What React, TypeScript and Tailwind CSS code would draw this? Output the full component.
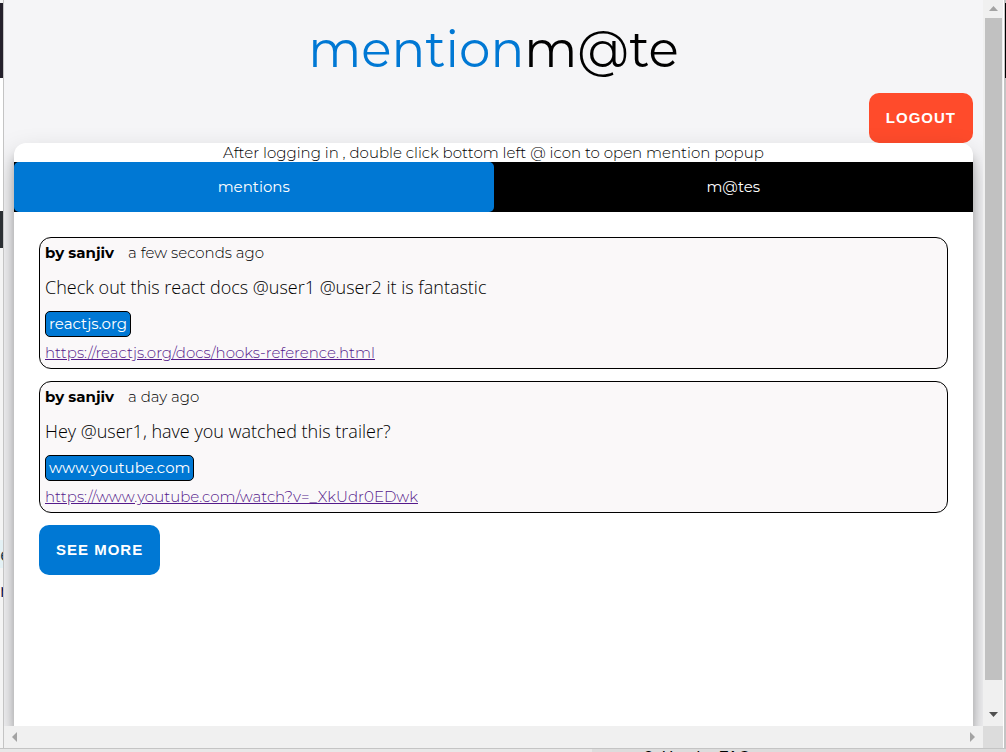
import { useState } from "react";

interface Mention {
  id: number;
  author: string;
  time: string;
  message: string;
  site: string;
  url: string;
}

const MENTIONS: Mention[] = [
  {
    id: 1,
    author: "sanjiv",
    time: "a few seconds ago",
    message: "Check out this react docs @user1 @user2 it is fantastic",
    site: "reactjs.org",
    url: "https://reactjs.org/docs/hooks-reference.html",
  },
  {
    id: 2,
    author: "sanjiv",
    time: "a day ago",
    message: "Hey @user1, have you watched this trailer?",
    site: "www.youtube.com",
    url: "https://www.youtube.com/watch?v=_XkUdr0EDwk",
  },
];

const TABS = ["mentions", "m@tes"];

function MentionCard({ mention }: { mention: Mention }) {
  return (
    <li className="rounded-xl border border-black bg-[#faf8f9] p-[5px]">
      <p className="flex gap-3.5 leading-5">
        <b className="font-bold">by {mention.author}</b>
        <span>{mention.time}</span>
      </p>
      <p className="my-3 font-['Segoe_UI','Open_Sans',sans-serif] text-lg leading-6">{mention.message}</p>
      <span className="block w-fit rounded-[5px] border border-black bg-[#0078d4] px-[3px] font-normal leading-6 text-white">
        {mention.site}
      </span>
      <a href={mention.url} className="mt-[6px] block w-fit leading-5 text-[#551a8b] underline">
        {mention.url}
      </a>
    </li>
  );
}

// Sliver of the host page that shows beside the popup
function PageEdge() {
  return (
    <div className="flex w-1 shrink-0 flex-col overflow-hidden border-r border-[#c4c4c4] bg-[#f4f4f4] pt-[3px] font-['Open_Sans',sans-serif] text-lg font-normal">
      <div className="h-[75px] shrink-0 bg-[#24202b]" />
      <div className="h-[133px] shrink-0 bg-white" />
      <div className="h-[37px] shrink-0 bg-[#2b2f33]" />
      <div className="mt-[292px] h-7 shrink-0 bg-[#e4f1f5] leading-7 text-[#1c3d4d]">e</div>
      <div className="mt-2 h-7 shrink-0 leading-7 text-[#0a1a5c]">n</div>
    </div>
  );
}

function VerticalScrollbar() {
  return (
    <div className="flex w-5 shrink-0 flex-col bg-[#f0f0f0] pl-[2px] pr-px">
      <svg viewBox="0 0 17 18" className="h-[18px] w-[17px] shrink-0" aria-hidden="true">
        <path d="M4 11 L8.5 6 L13 11 Z" fill="#a3a3a3" />
      </svg>
      <div className="flex-1 bg-[#c1c1c1]" />
      <svg viewBox="0 0 17 46" className="h-[46px] w-[17px] shrink-0" aria-hidden="true">
        <path d="M4 32 L13 32 L8.5 37 Z" fill="#505050" />
      </svg>
    </div>
  );
}

function HorizontalScrollbar() {
  return (
    <div className="flex h-[22px] shrink-0 bg-[#f0f0f0]">
      <div className="flex flex-1 items-center justify-between px-[7px]">
        <svg viewBox="0 0 6 10" className="h-[10px] w-[6px]" aria-hidden="true">
          <path d="M6 0 L1 5 L6 10 Z" fill="#a3a3a3" />
        </svg>
        <svg viewBox="0 0 6 10" className="h-[10px] w-[6px]" aria-hidden="true">
          <path d="M0 0 L5 5 L0 10 Z" fill="#a3a3a3" />
        </svg>
      </div>
      <div className="w-5 bg-[#dcdcdc]" />
    </div>
  );
}

export default function App() {
  const [tab, setTab] = useState("mentions");

  return (
    <div className="flex h-screen flex-col overflow-hidden bg-[#e8e8e8] font-[Montserrat,Inter,sans-serif] text-[15px] font-light text-black">
      <div className="flex min-h-0 flex-1">
        <PageEdge />

        <div className="flex min-w-0 flex-1 flex-col">
          <div className="flex min-h-0 flex-1">
            <div className="flex min-w-0 flex-1 flex-col overflow-hidden bg-[#f5f5f7] px-[10px]">
              <h1 className="pt-5 text-center text-[50px] font-normal leading-[60px]">
                <span className="text-[#0078d4]">mention</span>m@te
              </h1>
              <button
                type="button"
                className="mt-[13px] h-[50px] shrink-0 self-end rounded-[10px] bg-[#ff4b2b] px-[17px] font-['Liberation_Sans',Arial,sans-serif] font-bold tracking-[1px] text-white"
              >
                LOGOUT
              </button>

              <main className="flex-1 rounded-t-xl bg-white shadow-[0_14px_28px_rgba(0,0,0,0.25),0_10px_10px_rgba(0,0,0,0.22)]">
                <p className="text-center leading-[19px]">
                  After logging in , double click bottom left @ icon to open mention popup
                </p>
                <div role="tablist" className="flex bg-black font-normal">
                  {TABS.map((name) => (
                    <button
                      key={name}
                      type="button"
                      role="tab"
                      aria-selected={tab === name}
                      onClick={() => setTab(name)}
                      className={
                        tab === name
                          ? "h-[50px] flex-1 rounded-[5px] bg-[#0078d4] text-white"
                          : "h-[50px] flex-1 bg-black text-white"
                      }
                    >
                      {name}
                    </button>
                  ))}
                </div>

                <div className="p-[25px]">
                  <ul className="flex flex-col gap-3">
                    {MENTIONS.map((mention) => (
                      <MentionCard key={mention.id} mention={mention} />
                    ))}
                  </ul>
                  <button
                    type="button"
                    className="mt-3 h-[50px] rounded-[10px] bg-[#0078d4] px-[17px] font-['Liberation_Sans',Arial,sans-serif] font-bold tracking-[1px] text-white"
                  >
                    SEE MORE
                  </button>
                </div>
              </main>
            </div>
            <VerticalScrollbar />
          </div>
          <HorizontalScrollbar />
        </div>

        <div className="w-[3px] shrink-0 border-l border-white bg-[#c4c4c4] pl-px pt-[3px]">
          <div className="h-[75px] bg-black" />
        </div>
      </div>

      {/* Host page below the popup */}
      <div className="flex h-1 shrink-0 justify-end overflow-hidden border-t border-[#c4c4c4]">
        <p className="w-[414px] bg-[#dcdcdc] pl-[52px] font-['Liberation_Sans',Arial,sans-serif] text-base font-normal leading-[18px]">
          2. Header FAQ
        </p>
      </div>
    </div>
  );
}
